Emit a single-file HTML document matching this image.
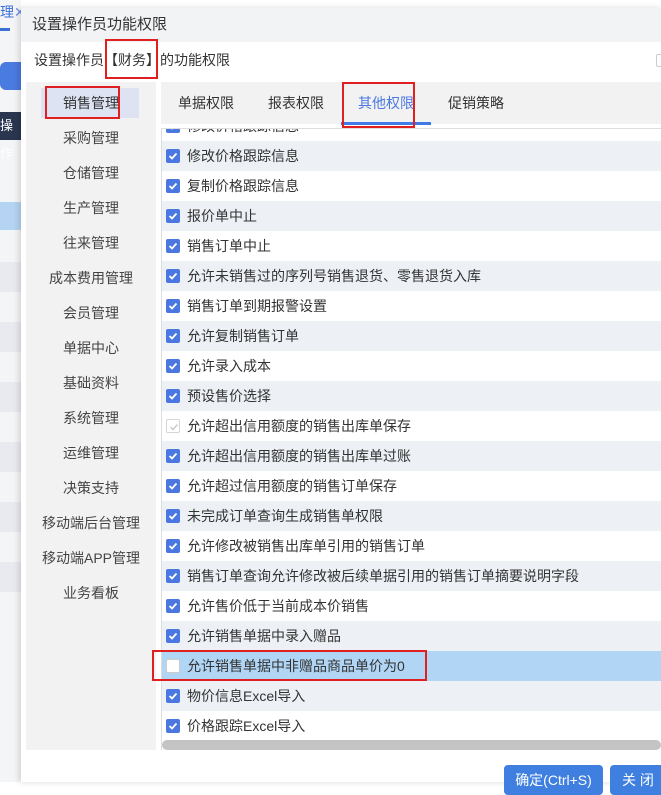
<!DOCTYPE html>
<html><head><meta charset="utf-8"><style>
*{margin:0;padding:0;box-sizing:border-box}
body{width:661px;height:782px;overflow:hidden;background:#fff;font-family:"Liberation Sans","Noto Sans CJK SC",sans-serif;font-size:14px;color:#333;position:relative}
.abs{position:absolute}
.ck{position:absolute;left:4px;top:8px;width:14px;height:14px;border-radius:2px;background:#4a78e0}
.ck svg{position:absolute;left:2px;top:2px}
.row{position:absolute;left:0;width:500px;height:30px;line-height:30px;padding-left:25px;white-space:nowrap}
.g{background:#edf0f5}
.menu div{position:absolute;left:0;width:130px;text-align:center;height:20px;line-height:20px;color:#444}
.red{position:absolute;border:2px solid #e02020}
</style></head><body>
<div class="abs" style="left:0;top:0;width:21px;height:782px;background:#f4f5f7"></div>
<div class="abs" style="left:0;top:2px;font-size:14px;color:#3a6fd8">理<span style="color:#6b8fe0">✕</span></div>
<div class="abs" style="left:0;top:28px;width:10px;height:3px;background:#3a6fd8"></div>
<div class="abs" style="left:0;top:62px;width:21px;height:28px;background:#4a7be0;border-radius:6px 0 0 6px"></div>
<div class="abs" style="left:0;top:112px;width:21px;height:28px;background:#2a3550;color:#fff;font-size:13px;line-height:28px">操作</div>
<div class="abs" style="left:0;top:202px;width:21px;height:28px;background:#b5d3f2"></div>
<div class="abs" style="left:0;top:262px;width:21px;height:30px;background:#e8eaef"></div>
<div class="abs" style="left:0;top:322px;width:21px;height:30px;background:#e8eaef"></div>
<div class="abs" style="left:0;top:382px;width:21px;height:30px;background:#e8eaef"></div>
<div class="abs" style="left:0;top:442px;width:21px;height:30px;background:#e8eaef"></div>
<div class="abs" style="left:0;top:502px;width:21px;height:30px;background:#e8eaef"></div>
<div class="abs" style="left:0;top:562px;width:21px;height:30px;background:#e8eaef"></div>
<div class="abs" style="left:21px;top:8px;width:640px;height:774px;background:#fff;box-shadow:-2px 0 6px rgba(0,0,0,.15)"></div>
<div class="abs" style="left:21px;top:8px;width:640px;height:34px;background:#f2f3f5;font-size:15px;line-height:34px;padding-left:11px;color:#333">设置操作员功能权限</div>
<div class="abs" style="left:34px;top:50px;line-height:20px;color:#333">设置操作员【财务】的功能权限</div>
<div class="red" style="left:105px;top:39px;width:53px;height:40px"></div>
<div class="abs" style="left:656px;top:54px;width:8px;height:13px;border:1px solid #ccc;border-radius:2px"></div>
<div class="abs menu" style="left:26px;top:82px;width:130px;height:668px;background:#f2f2f2">
 <div style="left:15px;top:6px;width:98px;height:30px;background:#dde3f3"></div>
 <div style="top:11px;color:#333">销售管理</div>
 <div style="top:46px">采购管理</div>
 <div style="top:81px">仓储管理</div>
 <div style="top:116px">生产管理</div>
 <div style="top:151px">往来管理</div>
 <div style="top:186px">成本费用管理</div>
 <div style="top:221px">会员管理</div>
 <div style="top:256px">单据中心</div>
 <div style="top:291px">基础资料</div>
 <div style="top:326px">系统管理</div>
 <div style="top:361px">运维管理</div>
 <div style="top:396px">决策支持</div>
 <div style="top:431px">移动端后台管理</div>
 <div style="top:466px">移动端APP管理</div>
 <div style="top:501px">业务看板</div>
</div>
<div class="red" style="left:45px;top:86px;width:75px;height:33px"></div>
<div class="abs" style="left:161px;top:82px;width:500px;height:42px;background:#f2f2f2"></div>
<div class="abs" style="left:161px;top:128px;width:500px;height:1px;background:#ddd"></div>
<div class="abs" style="left:178px;top:93px;line-height:20px;color:#333">单据权限</div>
<div class="abs" style="left:268px;top:93px;line-height:20px;color:#333">报表权限</div>
<div class="abs" style="left:358px;top:93px;line-height:20px;color:#4a78e0">其他权限</div>
<div class="abs" style="left:448px;top:93px;line-height:20px;color:#333">促销策略</div>
<div class="abs" style="left:341px;top:122px;width:90px;height:3px;background:#3f7be8"></div>
<div class="red" style="left:342px;top:82px;width:73px;height:46px"></div>
<div class="abs" style="left:161px;top:129px;width:1px;height:621px;background:#ddd"></div>
<div class="abs" style="left:162px;top:129px;width:499px;height:611px;overflow:hidden">
<div style="position:relative;top:-18px">
<div class="row" style="top:0"><span class="ck"></span>修改价格跟踪信息</div>
<div class="row g" style="top:30px"><span class="ck"></span>修改价格跟踪信息</div>
<div class="row" style="top:60px"><span class="ck"></span>复制价格跟踪信息</div>
<div class="row g" style="top:90px"><span class="ck"></span>报价单中止</div>
<div class="row" style="top:120px"><span class="ck"></span>销售订单中止</div>
<div class="row g" style="top:150px"><span class="ck"></span>允许未销售过的序列号销售退货、零售退货入库</div>
<div class="row" style="top:180px"><span class="ck"></span>销售订单到期报警设置</div>
<div class="row g" style="top:210px"><span class="ck"></span>允许复制销售订单</div>
<div class="row" style="top:240px"><span class="ck"></span>允许录入成本</div>
<div class="row g" style="top:270px"><span class="ck"></span>预设售价选择</div>
<div class="row" style="top:300px"><span class="ck" style="background:#fff;border:1px solid #d5d5d5"></span>允许超出信用额度的销售出库单保存</div>
<div class="row g" style="top:330px"><span class="ck"></span>允许超出信用额度的销售出库单过账</div>
<div class="row" style="top:360px"><span class="ck"></span>允许超过信用额度的销售订单保存</div>
<div class="row g" style="top:390px"><span class="ck"></span>未完成订单查询生成销售单权限</div>
<div class="row" style="top:420px"><span class="ck"></span>允许修改被销售出库单引用的销售订单</div>
<div class="row g" style="top:450px"><span class="ck"></span>销售订单查询允许修改被后续单据引用的销售订单摘要说明字段</div>
<div class="row" style="top:480px"><span class="ck"></span>允许售价低于当前成本价销售</div>
<div class="row g" style="top:510px"><span class="ck"></span>允许销售单据中录入赠品</div>
<div class="row" style="top:540px;background:#b1d6f5"><span class="ck" style="background:#fff;border:1px solid #ccc"></span>允许销售单据中非赠品商品单价为0</div>
<div class="row g" style="top:570px"><span class="ck"></span>物价信息Excel导入</div>
<div class="row" style="top:600px"><span class="ck"></span>价格跟踪Excel导入</div>
</div>
</div>
<div class="red" style="left:152px;top:650px;width:275px;height:31px"></div>
<div class="abs" style="left:162px;top:740px;width:499px;height:10px;background:#c4c4c4;border-radius:5px"></div>
<div class="abs" style="left:504px;top:765px;width:99px;height:30px;background:#3f7fe0;border-radius:4px;color:#fff;text-align:center;line-height:30px">确定(Ctrl+S)</div>
<div class="abs" style="left:610px;top:765px;width:60px;height:30px;background:#3f7fe0;border-radius:4px;color:#fff;padding-left:12px;line-height:30px">关 闭</div>
<script>
document.querySelectorAll('.ck').forEach(function(c){if(c.style.background.indexOf('fff')<0&&c.style.background.indexOf('255')<0)c.innerHTML='<svg width="10" height="10" viewBox="0 0 10 10"><path d="M1.5 5 L4 7.5 L8.5 2.5" stroke="#fff" stroke-width="1.8" fill="none"/></svg>';});
var d=document.querySelectorAll('.row')[10].querySelector('.ck');d.innerHTML='<svg width="10" height="10" viewBox="0 0 10 10"><path d="M1.5 5 L4 7.5 L8.5 2.5" stroke="#ccc" stroke-width="1.5" fill="none"/></svg>';
</script>
</body></html>
